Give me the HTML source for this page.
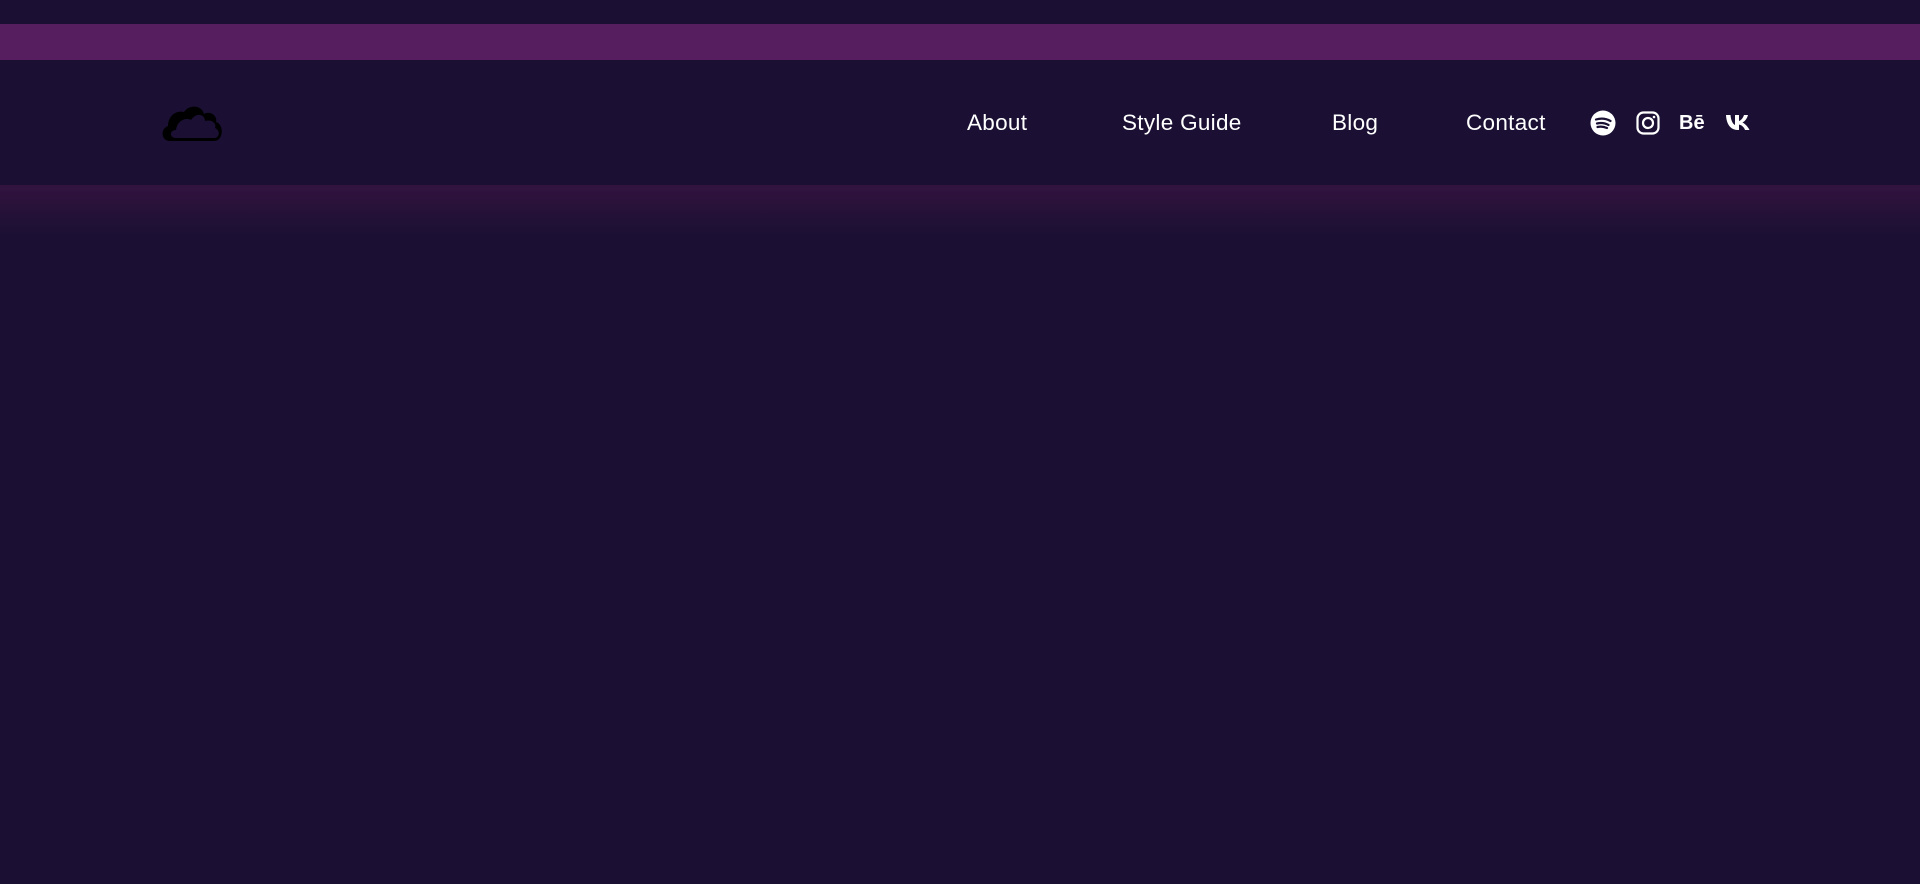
<!DOCTYPE html>
<html><head><meta charset="utf-8"><style>
html,body{margin:0;padding:0;width:1920px;height:884px;background:#1b1033;overflow:hidden;font-family:"Liberation Sans",sans-serif}
.bar{position:absolute;left:0;top:24px;width:1920px;height:36px;background:#561d5f}
.grad{position:absolute;left:0;top:185px;width:1920px;height:50px;background:linear-gradient(#32133f,#1b1033)}
.nav a{position:absolute;top:109px;color:#fff;font-size:22.5px;letter-spacing:0.3px;text-decoration:none;line-height:28px}
svg{position:absolute}
</style></head><body>
<div class="bar"></div>
<div class="grad"></div>
<svg style="left:158px;top:102px" width="68" height="42" viewBox="0 0 68 42">
<path d="M12 39 C3 39 2 27 10 24 C10 14 18 8 26 10 C31 2 44 3 46 12 C52 8 60 14 58 20 C66 22 66 39 56 39 Z" fill="#000"/>
<path d="M17 36 C11 35 12 28 18 28 C19 19 27 15 33 18 C38 10 47 12 47 19 C53 17 59 21 57 26 C62 28 62 35 57 36 Z" fill="#1b1033"/>
</svg>
<div class="nav">
<a style="left:967px">About</a>
<a style="left:1122px">Style Guide</a>
<a style="left:1332px">Blog</a>
<a style="left:1466px">Contact</a>
</div>
<svg style="left:1590px;top:110px" width="26" height="26" viewBox="0 0 26 26"><circle cx="13" cy="13" r="12.5" fill="#fff"/><path d="M6 9.5 C11 8 16 8.5 20.5 11 M7 13.5 C11 12.5 15 13 18.5 15 M7.5 17 C11 16.2 14 16.7 17 18" stroke="#1b1033" stroke-width="2.2" fill="none" stroke-linecap="round"/></svg>
<svg style="left:1636px;top:111px" width="24" height="24" viewBox="0 0 24 24"><rect x="1.5" y="1.5" width="21" height="21" rx="6" fill="none" stroke="#fff" stroke-width="2.2"/><circle cx="12" cy="12" r="5" fill="none" stroke="#fff" stroke-width="2.2"/><circle cx="18" cy="6" r="1.3" fill="#fff"/></svg>
<div style="position:absolute;left:1679px;top:110px;color:#fff;font-weight:bold;font-size:20px;line-height:26px">Bē</div>
<svg style="left:1725px;top:114px" width="27" height="17" viewBox="0 0 27 17"><path d="M1 1 H5.5 C6 7 8 10 10 11 V1 H14 V7 C16 6.5 18 4 19 1 H23 C22 5 19.5 7.5 17.5 8.5 C19.5 9.5 22.5 12 24.5 16 H20 C19 13 16.5 11 14 10.5 V16 H13 C6 16 1.5 11 1 1 Z" fill="#fff"/></svg>
</body></html>
